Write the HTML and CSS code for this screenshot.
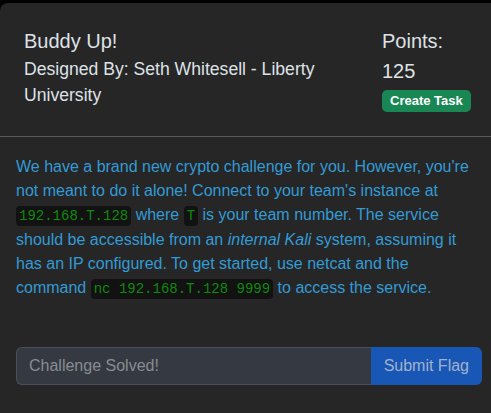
FILE: index.html
```html
<!DOCTYPE html>
<html>
<head>
<meta charset="utf-8">
<link rel="stylesheet" href="styles.css">
</head>
<body>
<div class="modal">
  <div class="modal-header">
    <div class="head-left">
      <div class="title">Buddy Up!</div>
      <div class="author">Designed By: Seth Whitesell - Liberty University</div>
    </div>
    <div class="head-right">
      <div class="points">Points:</div>
      <div class="points">125</div>
      <button class="btn-task">Create Task</button>
    </div>
  </div>
  <div class="modal-body">
    <p class="desc">We have a brand new crypto challenge for you. However, you're not meant to do it alone! Connect to your team's instance at <code>192.168.T.128</code> where <code>T</code> is your team number. The service should be accessible from an <em>internal Kali</em> system, assuming it has an IP configured. To get started, use netcat and the command <code>nc 192.168.T.128 9999</code> to access the service.</p>
    <div class="input-group">
      <input class="flag-input" type="text" placeholder="Challenge Solved!" disabled>
      <button class="btn-submit">Submit Flag</button>
    </div>
  </div>
</div>
</body>
</html>
```

FILE: styles.css
```css
html, body {
  margin: 0;
  padding: 0;
  background: #000;
}
body {
  font-family: "Liberation Sans", Arial, sans-serif;
  overflow: hidden;
}
.modal {
  margin-top: 3px;
  width: 498px;
  height: 420px;
  background: #262626;
  border-radius: 8px;
  box-sizing: border-box;
}
.modal-header {
  display: flex;
  padding: 23px 24px 24px 24px;
  border-bottom: 1px solid #56595d;
}
.head-left {
  flex: 1;
  padding-right: 30px;
  color: #dee2e6;
}
.title {
  font-size: 20px;
  line-height: 30px;
}
.author {
  font-size: 17.6px;
  line-height: 26.4px;
}
.head-right {
  width: 92px;
  color: #dee2e6;
}
.points {
  font-size: 20px;
  line-height: 30px;
}
.btn-task {
  display: block;
  margin-top: 4px;
  background: #198754;
  color: #fff;
  border: none;
  border-radius: 5px;
  font-family: "Liberation Sans", Arial, sans-serif;
  font-weight: bold;
  font-size: 13px;
  line-height: 16px;
  padding: 3px 8px;
  height: 22px;
}
.modal-body {
  padding: 18px 16px 16px 16px;
}
.desc {
  margin: 0;
  color: #339bd5;
  font-size: 16px;
  line-height: 24px;
}
code {
  font-family: "Liberation Mono", "Courier New", monospace;
  font-size: 14px;
  color: #0e8a0e;
  background: #121212;
  border-radius: 4px;
  padding: 2px 3px;
}
.input-group {
  display: flex;
  margin-top: 46px;
  height: 38px;
}
.flag-input {
  flex: 1;
  min-width: 0;
  box-sizing: border-box;
  height: 38px;
  background: #353a42;
  border: 1px solid #4b5058;
  border-right: none;
  border-radius: 6px 0 0 6px;
  padding: 6px 12px;
  font-family: "Liberation Sans", Arial, sans-serif;
  font-size: 16px;
  color: #dee2e6;
  outline: none;
}
.flag-input::placeholder {
  color: #878c93;
}
.btn-submit {
  box-sizing: border-box;
  height: 38px;
  background: #1857b5;
  color: #a3b2cc;
  border: none;
  border-radius: 0 6px 6px 0;
  padding: 6px 13px;
  font-family: "Liberation Sans", Arial, sans-serif;
  font-size: 16px;
}
```
